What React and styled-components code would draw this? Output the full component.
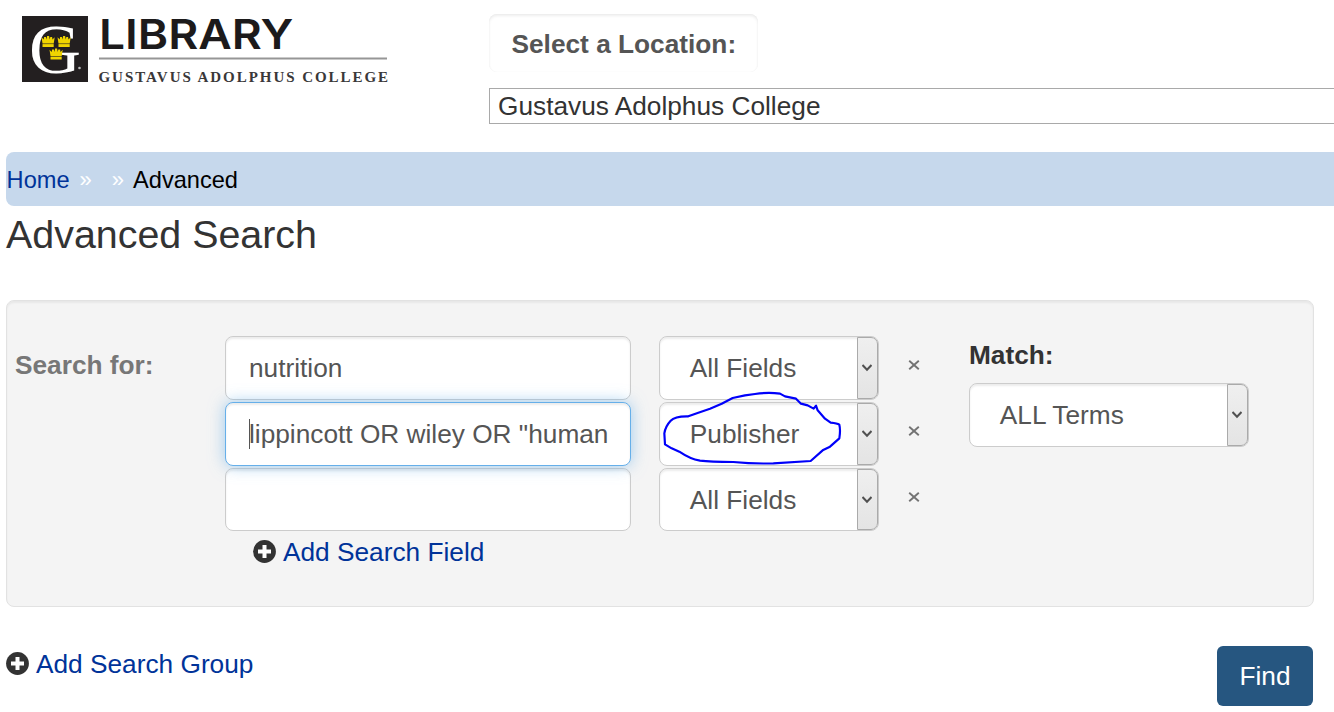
import { useState } from "react"
import styled, { createGlobalStyle } from "styled-components";


const App = () => {

    const [rows, setRows] = useState([
      { id: 1, term: 'nutrition', field: 'All Fields' },
      { id: 2, term: 'lippincott OR wiley OR "human', field: 'Publisher', focused: true, circled: true },
      { id: 3, term: '', field: 'All Fields' },
    ]);

    const removeRow = (id) => {
      setRows(rows.filter((row) => row.id !== id));
    }

  return (
    <Page>
      <GlobalStyle />
      <Header>
        <Logo />
        <Location>
          <LocationLabel>Select a Location:</LocationLabel>
          <LocationSelect>Gustavus Adolphus College</LocationSelect>
        </Location>
      </Header>
      <Breadcrumb>
        <a href="#home">Home</a>
        <Sep $space={10}>»</Sep>
        <Sep $space={20}>»</Sep>
        <span className="current">Advanced</span>
      </Breadcrumb>
      <Title>Advanced Search</Title>
      <Group>
        <SearchLabel>Search for:</SearchLabel>
        <Fields>
          {rows.map((row) =>
            <FieldRow key={row.id}>
              <Term $focused={row.focused}>
                {row.focused && <Caret />}
                {row.term}
              </Term>
              <Dropdown label={row.field} width={220}>
                {row.circled && <Circle />}
              </Dropdown>
              <Remove onClick={() => removeRow(row.id)} aria-label="Remove">
                <svg width="12" height="10" viewBox="0 0 12 10">
                  <path d="M1.2 0.8L10.8 9.2M10.8 0.8L1.2 9.2" stroke="#737373" strokeWidth="1.9" />
                </svg>
              </Remove>
            </FieldRow>
          )}
          <AddField href="#field"><PlusIcon />Add Search Field</AddField>
        </Fields>
        <Match>
          <h4>Match:</h4>
          <Dropdown label="ALL Terms" width={280} />
        </Match>
      </Group>
      <Footer>
        <AddLink href="#group"><PlusIcon />Add Search Group</AddLink>
        <Find>Find</Find>
      </Footer>
    </Page>
  )
}

const Crown = ({ x, y }) => (
  <g transform={`translate(${x} ${y})`} fill="#f0d400">
    <path d="M0 1.2L2.2 3.4L2.6 1H4.4L5 3.4L5.6 0H7.6L8.2 3.4L8.8 1H10.6L11 3.4L13.2 1.2L12.2 7.6H1Z" />
    <path d="M1 8.1H12.2V11H1Z" />
  </g>
)

const Logo = () => (
  <LogoBox>
    <svg width="370" height="86" viewBox="20 0 370 86">
      <rect x="22" y="16" width="66" height="66" fill="#231f20" />
      <text x="29" y="72.5" className="mark" textLength="52" lengthAdjust="spacingAndGlyphs">G</text>
      <Crown x={41.5} y={36} />
      <Crown x={57.5} y={36} />
      <Crown x={49.5} y={48.5} />
      <circle cx="79.5" cy="68" r="1.3" fill="#bbb" />
      <text x="99" y="48.5" className="name" textLength="194.5" lengthAdjust="spacingAndGlyphs">LIBRARY</text>
      <rect x="99" y="57.5" width="288" height="2" fill="#969696" />
      <text x="98.5" y="81.5" className="college" textLength="289.5">GUSTAVUS ADOLPHUS COLLEGE</text>
    </svg>
  </LogoBox>
)

const Dropdown = ({ label, width, children }) => (
  <Select $width={width}>
    <span>{label}</span>
    <Arrow>
      <svg width="10" height="8" viewBox="0 0 10 8">
        <path d="M0.5 1L5 5.8L9.5 1" fill="none" stroke="#505050" strokeWidth="2" />
      </svg>
    </Arrow>
    {children}
  </Select>
)

const PlusIcon = () => (
  <svg width="23" height="23" viewBox="0 0 23 23">
    <circle cx="11.5" cy="11.5" r="11.4" fill="#333" />
    <path d="M11.5 5V18M5 11.5H18" stroke="#fff" strokeWidth="4" />
  </svg>
)

// pen mark round the selected field
const Circle = () => (
  <Mark viewBox="60 195 555 234">
    <path d="M145 274Q105 273 92 287Q76 304 73 325L75 358L95 370L118 380Q150 402 180 407Q210 411 280 411Q340 417 400 415L512 408L548 376L570 365L598 340Q602 315 598 299Q592 295 572 293L555 281L533 256L528 242L521 251L503 241L483 236L468 221L435 214L420 206Q385 201 345 207L315 211L278 219L245 236L210 251L175 263Z" />
  </Mark>
)

const GlobalStyle = createGlobalStyle`
  * {
    box-sizing: border-box;
  }
  body {
    margin: 0;
    overflow: hidden;
    background: white;
    color: #333;
    font-family: "Liberation Sans", Arial, sans-serif;
    font-size: 26.25px;
  }
  a {
    color: #003399;
    text-decoration: none;
  }
`

const Page = styled.div`
  width: 1334px;
  height: 712px;
  overflow: hidden;
  padding-left: 6px;
`

const Header = styled.header`
  display: flex;
  height: 152px;
`

const LogoBox = styled.div`
  width: 483px;
  flex-shrink: 0;
  padding-left: 14px;
  svg {
    display: block;
  }
  .mark {
    font: 70px "Liberation Serif", serif;
    fill: white;
  }
  .name {
    font: 600 41px Inter, sans-serif;
    fill: #1c1a1b;
  }
  .college {
    font: bold 15px "Liberation Serif", serif;
    fill: #3a3839;
  }
`

const Location = styled.div`
  flex: 1;
  display: flex;
  flex-direction: column;
  align-items: flex-start;
  padding-top: 14px;
`

const LocationLabel = styled.div`
  width: 269px;
  height: 58px;
  margin-bottom: 16px;
  padding-left: 22.5px;
  border-radius: 8px;
  box-shadow: inset 0 2px 3px rgba(0, 0, 0, 0.07), inset 0 0 1px rgba(0, 0, 0, 0.08);
  color: #555;
  font-weight: bold;
  line-height: 60px;
`

const LocationSelect = styled.div`
  width: 100%;
  height: 36px;
  padding-left: 8px;
  border: 1px solid #a9a9a9;
  border-right: none;
  line-height: 35px;
`

const Breadcrumb = styled.nav`
  display: flex;
  align-items: center;
  height: 54px;
  padding: 2px 0 0 0.6px;
  border-radius: 8px 0 0 8px;
  background: #c6d8ec;
  font-size: 23.6px;
  line-height: 54px;
  .current {
    margin-left: 9px;
    color: black;
  }
`

const Sep = styled.span`
  margin-left: ${(props) => props.$space}px;
  color: white;
  font-size: 22px;
`

const Title = styled.h1`
  height: 94px;
  margin: 0;
  font-size: 39.4px;
  font-weight: normal;
  line-height: 56px;
`

const Group = styled.section`
  display: flex;
  width: 1308px;
  height: 307px;
  padding: 35px 8px 0;
  border: 1px solid #e2e2e2;
  border-radius: 8px;
  background: #f4f4f4;
  box-shadow: inset 0 2px 2px rgba(0, 0, 0, 0.05);
`

const SearchLabel = styled.div`
  width: 210px;
  color: #777;
  font-weight: bold;
  line-height: 58px;
`

const Fields = styled.div`
  width: 744px;
`

const FieldRow = styled.div`
  display: flex;
  align-items: center;
  height: 66px;
  padding-bottom: 2px;
  &:nth-child(3) > div {
    height: 63px;
    margin-bottom: 1px;
    > span:first-child {
      padding-top: 1px;
    }
  }
`

const Term = styled.div`
  position: relative;
  display: flex;
  align-items: center;
  width: 406px;
  height: 64px;
  margin-right: 28px;
  padding-left: 23px;
  border: 1px solid ${(props) => props.$focused ? '#66afe9' : '#ccc'};
  border-radius: 8px;
  background: white;
  box-shadow: ${(props) => props.$focused
    ? 'inset 0 2px 2px rgba(0, 0, 0, 0.075), 0 0 16px rgba(102, 175, 233, 0.6)'
    : 'inset 0 2px 2px rgba(0, 0, 0, 0.075)'};
  color: #555;
  white-space: pre;
  z-index: ${(props) => props.$focused ? 1 : 0};
`

const Caret = styled.i`
  width: 1px;
  height: 30px;
  margin-right: -1px;
  background: #555;
`

const Select = styled.div`
  position: relative;
  display: flex;
  align-items: center;
  justify-content: space-between;
  width: ${(props) => props.$width}px;
  height: 64px;
  padding-left: 29.8px;
  border: 1px solid #ccc;
  border-radius: 8px;
  background: white;
  box-shadow: inset 0 2px 2px rgba(0, 0, 0, 0.075);
  color: #555;
`

const Arrow = styled.span`
  display: flex;
  align-items: center;
  justify-content: center;
  width: 21px;
  height: 100%;
  padding-right: 1px;
  border: 1px solid #aaa;
  border-radius: 0 7px 7px 0;
  background: linear-gradient(#efefef, #e4e4e4);
`

const Mark = styled.svg`
  position: absolute;
  top: -13px;
  left: 0;
  width: 185px;
  height: 78px;
  z-index: 2;
  path {
    fill: none;
    stroke: #0000fa;
    stroke-width: 6.5;
    stroke-linejoin: round;
  }
`

const Remove = styled.button`
  display: flex;
  margin: 0 0 6px 29px;
  padding: 0;
  border: none;
  background: none;
`

const AddLink = styled.a`
  display: flex;
  align-items: center;
  gap: 7px;
  height: 36px;
  svg {
    margin-bottom: 1px;
  }
`

const AddField = styled(AddLink)`
  margin-left: 28px;
`

const Match = styled.div`
  h4 {
    margin: 0 0 9px;
    font-size: 26.25px;
    line-height: 38px;
  }
`

const Footer = styled.div`
  display: flex;
  justify-content: space-between;
  width: 1307px;
  padding-top: 39px;
`

const Find = styled.button`
  width: 96px;
  height: 60px;
  padding: 0;
  border: none;
  border-radius: 6px;
  background: #265680;
  color: white;
  font: inherit;
`

export default App
